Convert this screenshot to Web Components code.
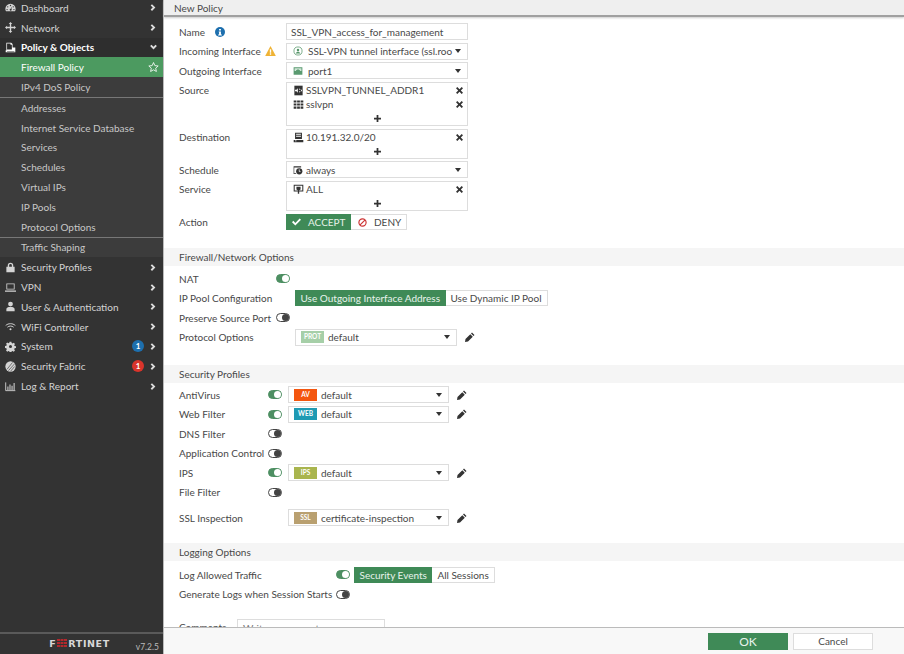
<!DOCTYPE html>
<html>
<head>
<meta charset="utf-8">
<title>New Policy</title>
<style>
html, body { margin: 0; height: 100%; overflow: hidden; }
body { font-family: Lato, "Open Sans", sans-serif; font-size: 10px; color: #484848; }
</style>
</head>
<body>
<fg-app>
  <fg-sidebar slot="side">
    <fg-nav icon="dash" arrow="right">Dashboard</fg-nav>
    <fg-nav icon="net" arrow="right">Network</fg-nav>
    <fg-nav icon="policy" arrow="down" kind="open">Policy &amp; Objects</fg-nav>
    <fg-nav kind="active" fav>Firewall Policy</fg-nav>
    <fg-nav kind="sub">IPv4 DoS Policy</fg-nav>
    <fg-nav-sep></fg-nav-sep>
    <fg-nav kind="sub">Addresses</fg-nav>
    <fg-nav kind="sub">Internet Service Database</fg-nav>
    <fg-nav kind="sub">Services</fg-nav>
    <fg-nav kind="sub">Schedules</fg-nav>
    <fg-nav kind="sub">Virtual IPs</fg-nav>
    <fg-nav kind="sub">IP Pools</fg-nav>
    <fg-nav kind="sub">Protocol Options</fg-nav>
    <fg-nav-sep></fg-nav-sep>
    <fg-nav kind="sub">Traffic Shaping</fg-nav>
    <fg-nav icon="lock" arrow="right">Security Profiles</fg-nav>
    <fg-nav icon="laptop" arrow="right">VPN</fg-nav>
    <fg-nav icon="user" arrow="right">User &amp; Authentication</fg-nav>
    <fg-nav icon="wifi" arrow="right">WiFi Controller</fg-nav>
    <fg-nav icon="cog" arrow="right" badge="1" badge-color="#1d6fae">System</fg-nav>
    <fg-nav icon="fabric" arrow="right" badge="1" badge-color="#d9342b">Security Fabric</fg-nav>
    <fg-nav icon="chart" arrow="right">Log &amp; Report</fg-nav>
  </fg-sidebar>

  <fg-title slot="title">New Policy</fg-title>

  <fg-form slot="body">
    <fg-row label="Name" info>
      <fg-input>SSL_VPN_access_for_management</fg-input>
    </fg-row>
    <fg-row label="Incoming Interface" warn>
      <fg-select icon="tunnel" indent>SSL-VPN tunnel interface (ssl.roo</fg-select>
    </fg-row>
    <fg-row label="Outgoing Interface">
      <fg-select icon="port" indent>port1</fg-select>
    </fg-row>
    <fg-row label="Source" top>
      <fg-tags>
        <fg-tag icon="range">SSLVPN_TUNNEL_ADDR1</fg-tag>
        <fg-tag icon="group">sslvpn</fg-tag>
      </fg-tags>
    </fg-row>
    <fg-row label="Destination" top>
      <fg-tags><fg-tag icon="subnet">10.191.32.0/20</fg-tag></fg-tags>
    </fg-row>
    <fg-row label="Schedule">
      <fg-select icon="clock">always</fg-select>
    </fg-row>
    <fg-row label="Service" top>
      <fg-tags><fg-tag icon="service">ALL</fg-tag></fg-tags>
    </fg-row>
    <fg-row label="Action">
      <fg-action></fg-action>
    </fg-row>

    <fg-section style="margin:15.250px 0 1.500px">Firewall/Network Options</fg-section>
    <fg-row label="NAT" lw="97"><fg-toggle on></fg-toggle></fg-row>
    <fg-row label="IP Pool Configuration" lw="116">
      <fg-segment first="Use Outgoing Interface Address" second="Use Dynamic IP Pool"></fg-segment>
    </fg-row>
    <fg-row label="Preserve Source Port" lw="97"><fg-toggle></fg-toggle></fg-row>
    <fg-row label="Protocol Options" lw="116">
      <fg-profile tag="PROT" color="#a6cfa8" width="162">default</fg-profile>
    </fg-row>

    <fg-section style="margin:16.250px 0 1px">Security Profiles</fg-section>
    <fg-row label="AntiVirus" lw="89"><fg-toggle on></fg-toggle><fg-profile tag="AV" color="#f4560f" gap="6">default</fg-profile></fg-row>
    <fg-row label="Web Filter" lw="89"><fg-toggle on></fg-toggle><fg-profile tag="WEB" color="#1f9ab3" gap="6">default</fg-profile></fg-row>
    <fg-row label="DNS Filter" lw="89"><fg-toggle></fg-toggle></fg-row>
    <fg-row label="Application Control" lw="89"><fg-toggle></fg-toggle></fg-row>
    <fg-row label="IPS" lw="89"><fg-toggle on></fg-toggle><fg-profile tag="IPS" color="#a9b54e" gap="6">default</fg-profile></fg-row>
    <fg-row label="File Filter" lw="89"><fg-toggle></fg-toggle></fg-row>
    <fg-row label="SSL Inspection" lw="109" style="margin-top:6px"><fg-profile tag="SSL" color="#b9a070">certificate-inspection</fg-profile></fg-row>

    <fg-section style="margin:14px 0 3px">Logging Options</fg-section>
    <fg-row label="Log Allowed Traffic" lw="157">
      <fg-toggle on></fg-toggle>
      <fg-segment first="Security Events" second="All Sessions" gap="4"></fg-segment>
    </fg-row>
    <fg-row label="Generate Logs when Session Starts" lw="157"><fg-toggle></fg-toggle></fg-row>
    <fg-row label="Comments" lw="58" top style="margin-top:13.500px"><fg-comment>Write a comment...</fg-comment></fg-row>
  </fg-form>

  <fg-footer slot="foot"></fg-footer>
</fg-app>

<script>
// every icon used in the page, 16x16 box
const ICONS = {
  dash: '<path fill="currentColor" d="M8 2.500a7.500 7.500 0 0 0-7.500 7.500c0 1.300.4 2.600 1 3.600h13c.6-1 1-2.300 1-3.600A7.500 7.500 0 0 0 8 2.500zM8 4a1 1 0 1 1 0 2 1 1 0 0 1 0-2zM4 6a1 1 0 1 1 0 2 1 1 0 0 1 0-2zm8 0a1 1 0 1 1 0 2 1 1 0 0 1 0-2zM3 10a1 1 0 1 1 0 2 1 1 0 0 1 0-2zm10 0a1 1 0 1 1 0 2 1 1 0 0 1 0-2zM10.500 6 9.200 10a1.500 1.500 0 1 1-1-.3z" fill-rule="evenodd"/>',
  net: '<path fill="currentColor" d="M8 0l2.600 3H9v4h4V5.400L16 8l-3 2.600V9H9v4h1.600L8 16l-2.600-3H7V9H3v1.600L0 8l3-2.600V7h4V3H5.400z"/>',
  policy: '<path fill="currentColor" fill-rule="evenodd" d="M2 1h7l2 2v5h4v7H1v-3h1zm1 12v.700h10.700V13zM3 2.200V11h7V4H8V2.200z"/>',
  lock: '<path fill="currentColor" fill-rule="evenodd" d="M8 1a4 4 0 0 0-4 4v2H2v8h12V7h-2V5a4 4 0 0 0-4-4zM6 5a2 2 0 0 1 4 0v2H6z"/>',
  laptop: '<path fill="currentColor" fill-rule="evenodd" d="M2 2h12v9H2zm1.200 1.200v6.600h9.600V3.200zM0 12.500h16V14H0z"/>',
  user: '<path fill="currentColor" d="M8 1a3.500 3.500 0 1 1 0 7 3.500 3.500 0 0 1 0-7zM2 15v-3c0-2 2-3 3.500-3.300h5C12 9 14 10 14 12v3z"/>',
  wifi: '<path fill="none" stroke="currentColor" stroke-width="1.400" d="M1 6.500c4-3.500 10-3.500 14 0M3.500 9c2.600-2.200 6.400-2.200 9 0"/><circle cx="8" cy="12" r="1.500" fill="currentColor"/>',
  cog: '<path fill="currentColor" fill-rule="evenodd" d="M6.700 1h2.600l.4 2 1.300.6 1.700-1.100 1.800 1.800-1.100 1.700.6 1.300 2 .4v2.600l-2 .4-.6 1.300 1.100 1.700-1.800 1.800-1.700-1.100-1.300.6-.4 2H6.700l-.4-2-1.300-.6-1.700 1.100-1.800-1.800 1.100-1.700-.6-1.300-2-.4V7.300l2-.4.600-1.300L1.500 3.900l1.800-1.800L5 3.200l1.300-.6zM8 5.800a2.200 2.200 0 1 0 0 4.400 2.200 2.200 0 0 0 0-4.400z"/>',
  fabric: '<circle cx="8" cy="8" r="7.500" fill="currentColor"/><path stroke="#333" stroke-width=".9" d="M3 12 11 2M5 14l9-10M8 15l6-7"/>',
  chart: '<path fill="none" stroke="currentColor" stroke-width="1.300" d="M1 2v12h14"/><path fill="currentColor" d="M3.500 8h1.500v5H3.500zM6.500 5H8v8H6.500zM9.500 7H11v6H9.500zM12.500 3H14v10h-1.500z"/>',
  tunnel: '<circle cx="8" cy="8" r="6.500" fill="none" stroke="#56966a" stroke-width="1.200"/><circle cx="8" cy="6.500" r="2" fill="#56966a"/><path fill="#56966a" d="M4.500 11.800c.4-2 1.800-2.800 3.500-2.800s3.100.8 3.500 2.800z"/>',
  port: '<path fill="#5a9a70" d="M1 2h14v12H1z"/><path fill="#cfe5d6" d="M2.500 3.500h11V8H11V6.500H9V5H7v1.500H5V8H2.500z"/>',
  range: '<path fill="#333" d="M2 1h12v14H2z"/><path fill="#fff" d="M3 7h4v2H3zm6 0h4v2H9zM7 4.800v6.400L4 8zm2 0v6.400L12 8z"/>',
  group: '<path fill="#333" d="M1 2h4v3H1zm5 0h4v3H6zm5 0h4v3h-4zM1 6.500h4v3H1zm5 0h4v3H6zm5 0h4v3h-4zM1 11h4v3H1zm5 0h4v3H6zm5 0h4v3h-4z"/>',
  subnet: '<path fill="#333" fill-rule="evenodd" d="M3 1h10v9H3zm1.500 1.500V4h7V2.500zm0 3V7h7V5.500zM1 11.500h14V15H1z"/><path fill="#fff" d="M3 12.500h2v1H3z"/>',
  clock: '<path fill="#333" d="M1 2h12v2H2v9h3v1.500H1z"/><circle cx="10" cy="10" r="5" fill="#333"/><path stroke="#fff" stroke-width="1.200" fill="none" d="M10 7v3.500h2"/>',
  service: '<path fill="#333" fill-rule="evenodd" d="M1 1h14v10H1zm1.500 1.500v7h11v-7z"/><path fill="#333" d="M5 4h6v4l-2 1v5H7V9L5 8z"/>'
};
const svgIcon = (name, size) => `<svg width="${size}" height="${size}" viewBox="0 0 16 16">${ICONS[name] || ''}</svg>`;

class FgApp extends HTMLElement {
  constructor() {
    super();
    this.attachShadow({ mode: 'open' });
    this.shadowRoot.innerHTML = `
      <style>
        :host { display: flex; width: 904px; height: 654px; overflow: hidden; background: #fff; }
        .main { flex: 1; min-width: 0; display: flex; flex-direction: column; }
        .body { flex: 1; min-height: 0; overflow: hidden; }
      </style>
      <slot name="side"></slot>
      <div class="main">
        <slot name="title"></slot>
        <div class="body"><slot name="body"></slot></div>
        <slot name="foot"></slot>
      </div>`;
  }
}

class FgSidebar extends HTMLElement {
  constructor() {
    super();
    this.attachShadow({ mode: 'open' });
    this.shadowRoot.innerHTML = `
      <style>
        :host { display: flex; flex-direction: column; width: 163px; height: 654px; background: #333; border-right: 1px solid #bbb; flex: none; }
        .menu { flex: 1; margin-top: -2px; }
        .brand { height: 20px; border-top: 2px solid #5a5a5a; display: flex; align-items: center; justify-content: flex-end; gap: 26px; padding-right: 4px; }
        .logo { display: flex; align-items: center; font: bold 9.500px "DejaVu Sans", sans-serif; letter-spacing: .6px; color: #d8d8d8; position: relative; top: -1px; }
        .logo svg { margin: 0 1px; }
        .ver { font-size: 8.500px; color: #bbb; padding-top: 6px; }
      </style>
      <div class="menu"><slot></slot></div>
      <div class="brand">
        <span class="logo">F<svg width="10" height="8" viewBox="0 0 10 8"><path fill="#b3282d" d="M0 0h3v2H0zm3.500 0h3v2h-3zM7 0h3v2H7zM0 3h3v2H0zm3.500 0h3v2h-3zM7 3h3v2H7zM0 6h3v2H0zm3.500 0h3v2h-3zM7 6h3v2H7z"/></svg>RTINET</span>
        <span class="ver">v7.2.5</span>
      </div>`;
  }
}

class FgNav extends HTMLElement {
  connectedCallback() {
    if (this.shadowRoot) return;
    this.attachShadow({ mode: 'open' });
    const arrow = this.getAttribute('arrow');
    const chevron = arrow === 'down' ? 'M1.500 4l1.800-1.800L6 5l2.700-2.800L10.500 4 6 8.500z' : 'M4 1.500L2.200 3.300 5 6 2.200 8.700 4 10.500 8.500 6z';
    const badge = this.getAttribute('badge');
    this.shadowRoot.innerHTML = `
      <style>
        :host { display: flex; align-items: center; height: 19.800px; padding: 0 4px 0 5px; box-sizing: border-box; font-size: 10px; color: #d4d4d4; background: #333; }
        :host([kind=open]) { background: #2e2e2e; color: #fff; font-weight: bold; }
        :host([kind=active]) { background: #4c9a60; color: #fff; }
        :host([kind=sub]) { background: #3c3c3c; color: #c8c8c8; }
        .ic { width: 16px; display: flex; flex: none; }
        .label { flex: 1; white-space: nowrap; }
        .badge { width: 12px; height: 12px; border-radius: 50%; color: #fff; font: bold 8px/12px Lato, sans-serif; text-align: center; margin-right: 4px; }
        .end { width: 11px; display: flex; justify-content: center; }
      </style>
      <span class="ic">${svgIcon(this.getAttribute('icon'), 11)}</span>
      <span class="label"><slot></slot></span>
      ${badge ? `<span class="badge" style="background:${this.getAttribute('badge-color')}">${badge}</span>` : ''}
      <span class="end">
        ${arrow ? `<svg width="9" height="9" viewBox="0 0 12 12"><path fill="#ddd" d="${chevron}"/></svg>` : ''}
        ${this.hasAttribute('fav') ? '<svg width="12" height="12" viewBox="0 0 16 16"><path fill="none" stroke="#fff" stroke-width="1.200" d="M8 1.500l2 4.500 4.800.5-3.600 3.200 1 4.800L8 12.100l-4.200 2.400 1-4.800L1.200 6.500 6 6z"/></svg>' : ''}
      </span>`;
  }
}

class FgNavSep extends HTMLElement {
  constructor() {
    super();
    this.attachShadow({ mode: 'open' });
    this.shadowRoot.innerHTML = `<style>:host { display: block; height: 1px; background: #777; }</style>`;
  }
}

class FgTitle extends HTMLElement {
  constructor() {
    super();
    this.attachShadow({ mode: 'open' });
    this.shadowRoot.innerHTML = `
      <style>:host { display: flex; align-items: center; height: 15px; padding-left: 10px; background: #efefef; border-bottom: 2px solid #a0a0a0; box-shadow: 0 1px 2px #ccc; flex: none; font-size: 10px; color: #484848; }</style>
      <slot></slot>`;
  }
}

class FgForm extends HTMLElement {
  constructor() {
    super();
    this.attachShadow({ mode: 'open' });
    this.shadowRoot.innerHTML = `
      <style>:host { display: flex; flex-direction: column; gap: 2.500px; padding-top: 6px; }</style>
      <slot></slot>`;
  }
}

class FgRow extends HTMLElement {
  connectedCallback() {
    if (this.shadowRoot) return;
    this.attachShadow({ mode: 'open' });
    const lw = this.getAttribute('lw') || 107;
    const extra = this.hasAttribute('info')
      ? '<svg width="10" height="10" viewBox="0 0 16 16" style="margin-left:10px"><circle cx="8" cy="8" r="8" fill="#1d6fae"/><path fill="#fff" d="M6.500 3h3v2.500h-3zM6 7h3.500v5H11v1.500H5V12h1.500V8.500H6z"/></svg>'
      : this.hasAttribute('warn')
        ? '<svg width="11" height="10" viewBox="0 0 16 15" style="margin-left:4px"><path fill="#efb335" d="M8 0l8 15H0z"/><path fill="#fff" d="M7 5h2v5H7zm0 6h2v2H7z"/></svg>'
        : '';
    this.shadowRoot.innerHTML = `
      <style>
        :host { display: flex; align-items: center; min-height: 17px; padding-left: 15px; }
        :host([top]) { align-items: flex-start; }
        .label { width: ${lw}px; flex: none; display: flex; align-items: center; white-space: nowrap; color: #484848; height: 17px; }
        .ctl { display: flex; align-items: center; }
      </style>
      <span class="label">${this.getAttribute('label')}${extra}</span>
      <div class="ctl"><slot></slot></div>`;
  }
}

class FgInput extends HTMLElement {
  constructor() {
    super();
    this.attachShadow({ mode: 'open' });
    this.shadowRoot.innerHTML = `
      <style>:host { display: flex; align-items: center; box-sizing: border-box; width: 182px; height: 17px; padding-left: 4px; border: 1px solid #ddd; color: #484848; background: #fff; white-space: nowrap; }</style>
      <slot></slot>`;
  }
}

class FgSelect extends HTMLElement {
  connectedCallback() {
    if (this.shadowRoot) return;
    this.attachShadow({ mode: 'open' });
    const indent = this.hasAttribute('indent');
    this.shadowRoot.innerHTML = `
      <style>
        :host { display: flex; align-items: center; box-sizing: border-box; width: 182px; height: 17px; padding: 0 6px 0 6px; border: 1px solid #ddd; background: #fff; white-space: nowrap; color: #484848; }
        .ic { display: flex; width: ${indent ? 15 : 13}px; flex: none; }
        .txt { flex: 1; overflow: hidden; }
        .caret { width: 0; height: 0; border: 3.500px solid transparent; border-top: 4px solid #333; border-bottom: 0; flex: none; }
      </style>
      <span class="ic">${svgIcon(this.getAttribute('icon'), 10)}</span>
      <span class="txt"><slot></slot></span>
      <span class="caret"></span>`;
  }
}

class FgTags extends HTMLElement {
  constructor() {
    super();
    this.attachShadow({ mode: 'open' });
    this.shadowRoot.innerHTML = `
      <style>
        :host { display: block; box-sizing: border-box; width: 182px; border: 1px solid #ddd; background: #fff; padding-top: .500px; }
        .add { height: 13.500px; display: flex; align-items: center; justify-content: center; box-sizing: border-box; }
      </style>
      <slot></slot>
      <div class="add"><svg width="7" height="7" viewBox="0 0 8 8"><path fill="#333" d="M3 0h2v3h3v2H5v3H3V5H0V3h3z"/></svg></div>`;
  }
}

class FgTag extends HTMLElement {
  connectedCallback() {
    if (this.shadowRoot) return;
    this.attachShadow({ mode: 'open' });
    this.shadowRoot.innerHTML = `
      <style>
        :host { display: flex; align-items: center; height: 14.250px; padding: 0 4px 0 6px; color: #484848; white-space: nowrap; }
        .ic { display: flex; width: 13px; }
        .txt { flex: 1; }
      </style>
      <span class="ic">${svgIcon(this.getAttribute('icon'), 11)}</span>
      <span class="txt"><slot></slot></span>
      <svg width="7" height="7" viewBox="0 0 8 8"><path fill="#333" d="M1.500 0L4 2.500 6.500 0 8 1.500 5.500 4 8 6.500 6.500 8 4 5.500 1.500 8 0 6.500 2.500 4 0 1.500z"/></svg>`;
  }
}

class FgAction extends HTMLElement {
  constructor() {
    super();
    this.attachShadow({ mode: 'open' });
    this.shadowRoot.innerHTML = `
      <style>
        :host { display: flex; height: 16px; white-space: nowrap; }
        .b { display: flex; align-items: center; box-sizing: border-box; height: 16px; gap: 7px; }
        .on { width: 65px; padding-left: 6px; background: #3f8a57; color: #e6f2ea; }
        .off { width: 56px; padding-left: 7px; border: 1px solid #ddd; border-left: 0; color: #484848; }
      </style>
      <span class="b on"><svg width="9" height="8" viewBox="0 0 10 8"><path fill="#fff" d="M0 4.200l1.500-1.500L3.700 5 8.500 0 10 1.500 3.700 8z"/></svg>ACCEPT</span>
      <span class="b off"><svg width="9" height="9" viewBox="0 0 10 10"><circle cx="5" cy="5" r="4" fill="none" stroke="#c33" stroke-width="1.300"/><path stroke="#c33" stroke-width="1.300" d="M2.300 7.700l5.400-5.400"/></svg>DENY</span>`;
  }
}

class FgSection extends HTMLElement {
  constructor() {
    super();
    this.attachShadow({ mode: 'open' });
    this.shadowRoot.innerHTML = `
      <style>:host { display: flex; align-items: center; height: 18px; padding-left: 15px; background: #f5f5f5; color: #484848; font-size: 10px; }</style>
      <slot></slot>`;
  }
}

class FgToggle extends HTMLElement {
  constructor() {
    super();
    this.attachShadow({ mode: 'open' });
    this.shadowRoot.innerHTML = `
      <style>
        :host { display: block; box-sizing: border-box; width: 14px; height: 9px; border-radius: 5px; border: 1px solid #444; background: #fff; position: relative; flex: none; }
        :host([on]) { background: #4d8f62; border-color: #4d8f62; }
        i { position: absolute; right: 0; top: 0; width: 7px; height: 7px; border-radius: 50%; background: #444; }
        :host([on]) i { background: #fff; }
      </style>
      <i></i>`;
  }
}

class FgSegment extends HTMLElement {
  connectedCallback() {
    if (this.shadowRoot) return;
    this.attachShadow({ mode: 'open' });
    this.shadowRoot.innerHTML = `
      <style>
        :host { display: flex; height: 16px; white-space: nowrap; margin-left: ${this.getAttribute('gap') || 0}px; }
        span { display: flex; align-items: center; box-sizing: border-box; padding: 0 5px; }
        .on { background: #3f8a57; color: #e8f3ec; padding: 0 5.500px; }
        .off { border: 1px solid #ddd; border-left: 0; color: #484848; }
      </style>
      <span class="on">${this.getAttribute('first')}</span>
      <span class="off">${this.getAttribute('second')}</span>`;
  }
}

class FgProfile extends HTMLElement {
  connectedCallback() {
    if (this.shadowRoot) return;
    this.attachShadow({ mode: 'open' });
    this.shadowRoot.innerHTML = `
      <style>
        :host { display: flex; align-items: center; margin-left: ${this.getAttribute('gap') || 0}px; }
        .box { display: flex; align-items: center; box-sizing: border-box; width: ${this.getAttribute('width') || 161}px; height: 17px; padding: 0 6px 0 5px; border: 1px solid #ddd; background: #fff; white-space: nowrap; color: #484848; }
        .tag { width: 23px; height: 12px; background: ${this.getAttribute('color')}; color: #fff; font: bold 6.500px/12px Lato, sans-serif; text-align: center; flex: none; margin-right: 4px; }
        .txt { flex: 1; }
        .caret { width: 0; height: 0; border: 3.500px solid transparent; border-top: 4px solid #333; border-bottom: 0; }
        svg { margin-left: 8px; }
      </style>
      <div class="box"><span class="tag">${this.getAttribute('tag')}</span><span class="txt"><slot></slot></span><span class="caret"></span></div>
      <svg width="10" height="10" viewBox="0 0 10 10"><path fill="#333" d="M7 .5l2.500 2.500-1 1L6 1.500zM5.300 2.200l2.500 2.500L3 9.500 0 10l.5-3z"/></svg>`;
  }
}

class FgComment extends HTMLElement {
  constructor() {
    super();
    this.attachShadow({ mode: 'open' });
    this.shadowRoot.innerHTML = `
      <style>:host { display: flex; box-sizing: border-box; width: 148px; height: 30px; padding: 2px 5px; border: 1px solid #ddd; color: #777; white-space: nowrap; }</style>
      <slot></slot>`;
  }
}

class FgFooter extends HTMLElement {
  constructor() {
    super();
    this.attachShadow({ mode: 'open' });
    this.shadowRoot.innerHTML = `
      <style>
        :host { display: flex; align-items: center; justify-content: flex-end; gap: 5px; height: 26px; padding-right: 31px; background: #f8f8f8; border-top: 1px solid #bbb; flex: none; }
        span { display: flex; align-items: center; justify-content: center; box-sizing: border-box; width: 80px; height: 17px; font-size: 10px; }
        .ok { background: #3f8a57; color: #e8f3ec; font-size: 12px; }
        .cancel { background: #fff; border: 1px solid #ddd; color: #484848; }
      </style>
      <span class="ok">OK</span><span class="cancel">Cancel</span>`;
  }
}

customElements.define('fg-app', FgApp);
customElements.define('fg-sidebar', FgSidebar);
customElements.define('fg-nav', FgNav);
customElements.define('fg-nav-sep', FgNavSep);
customElements.define('fg-title', FgTitle);
customElements.define('fg-form', FgForm);
customElements.define('fg-row', FgRow);
customElements.define('fg-input', FgInput);
customElements.define('fg-select', FgSelect);
customElements.define('fg-tags', FgTags);
customElements.define('fg-tag', FgTag);
customElements.define('fg-action', FgAction);
customElements.define('fg-section', FgSection);
customElements.define('fg-toggle', FgToggle);
customElements.define('fg-segment', FgSegment);
customElements.define('fg-profile', FgProfile);
customElements.define('fg-comment', FgComment);
customElements.define('fg-footer', FgFooter);
</script>
</body>
</html>
